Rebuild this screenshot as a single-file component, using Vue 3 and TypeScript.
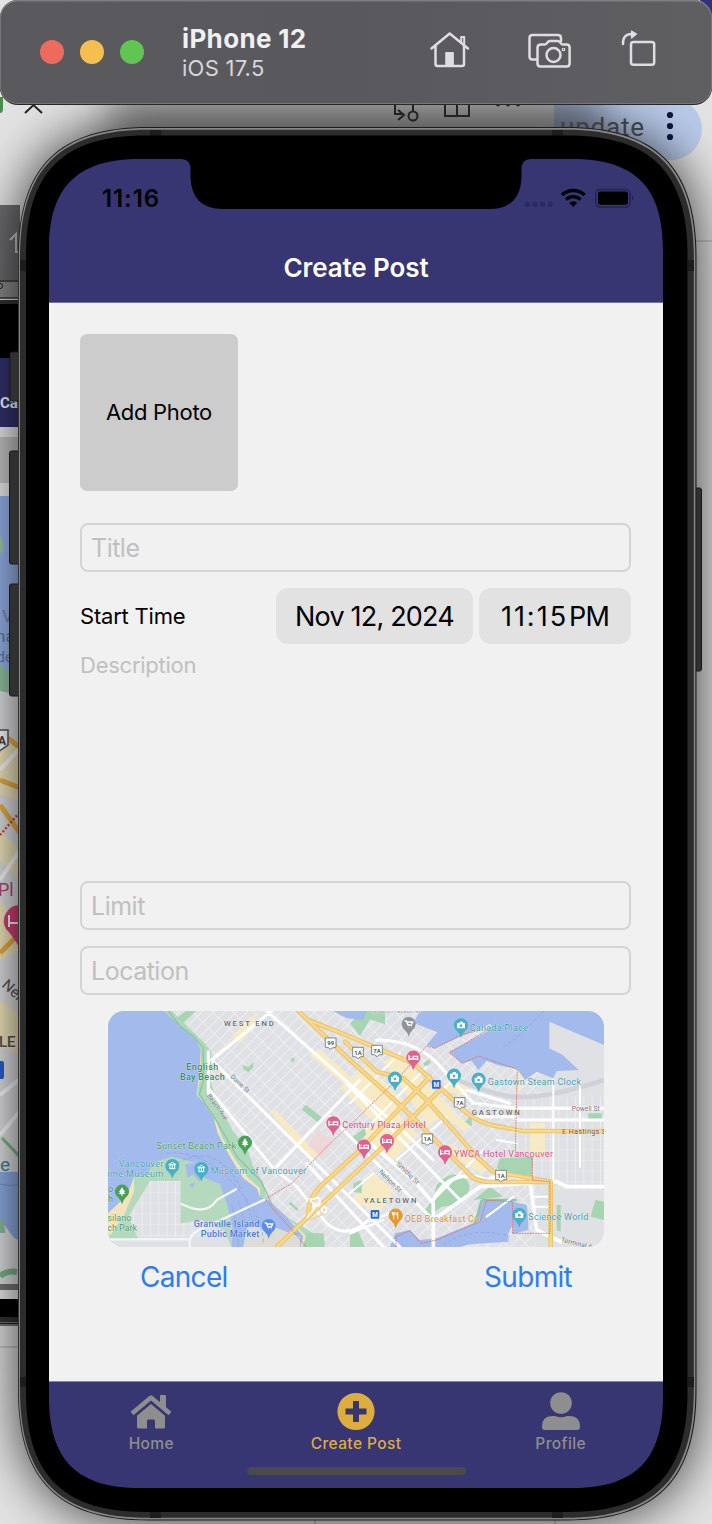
<script setup lang="ts">
interface Pin { x: number; y: number; color: string; kind: 'bed' | 'camera' | 'cart' | 'tree' | 'museum' | 'food' }
interface Label { x: number; y: number; text: string; color: string; size: number; width: number; rotate?: number; anchor?: string; weight?: number }
interface Shield { x: number; y: number; text: string }

function squircle(x: number, y: number, w: number, h: number, r: number): string {
  const e = r * 1.197
  const c = r * 0.368
  const X = x + w
  const Y = y + h
  return `M${x + e} ${y}H${X - e}C${X - c} ${y} ${X} ${y + c} ${X} ${y + e}V${Y - e}C${X} ${Y - c} ${X - c} ${Y} ${X - e} ${Y}H${x + e}C${x + c} ${Y} ${x} ${Y - c} ${x} ${Y - e}V${y + e}C${x} ${y + c} ${x + c} ${y} ${x + e} ${y}Z`
}

const frame = {
  edge: squircle(18, 127, 678.5, 1393.5, 109),
  shine: squircle(18.8, 128, 676.6, 1391.5, 108),
  band: squircle(20, 129.8, 673.8, 1388, 107),
  glass: squircle(26, 135.5, 661.5, 1376.5, 100),
}

const pink = '#e0608e'
const teal = '#48afc4'
const pins: Pin[] = [
  { x: 700, y: 370, color: pink, kind: 'bed' },
  { x: 792, y: 440, color: pink, kind: 'bed' },
  { x: 861, y: 423, color: pink, kind: 'bed' },
  { x: 940, y: 173, color: pink, kind: 'bed' },
  { x: 1035, y: 457, color: pink, kind: 'bed' },
  { x: 435, y: 428, color: '#48a357', kind: 'tree' },
  { x: 66, y: 575, color: '#48a357', kind: 'tree' },
  { x: 217, y: 498, color: teal, kind: 'museum' },
  { x: 304, y: 507, color: teal, kind: 'museum' },
  { x: 506, y: 678, color: '#5a8df0', kind: 'cart' },
  { x: 926, y: 72, color: '#8e949a', kind: 'cart' },
  { x: 1083, y: 76, color: teal, kind: 'camera' },
  { x: 885, y: 236, color: teal, kind: 'camera' },
  { x: 1062, y: 227, color: teal, kind: 'camera' },
  { x: 1136, y: 239, color: teal, kind: 'camera' },
  { x: 1258, y: 645, color: teal, kind: 'camera' },
  { x: 887, y: 647, color: '#e5982f', kind: 'food' },
]
const labels: Label[] = [
  { x: 372, y: 78, text: 'WEST END', color: '#66696e', size: 23, width: 149, weight: 500 },
  { x: 259, y: 210, text: 'English', color: '#388f5c', size: 27, width: 96, weight: 500 },
  { x: 240, y: 241, text: 'Bay Beach', color: '#388f5c', size: 27, width: 134, weight: 500 },
  { x: 169, y: 446, text: 'Sunset Beach Park', color: '#4c9a6a', size: 27, width: 239 },
  { x: 56, y: 500, text: 'Vancouver', color: '#459cac', size: 27, width: 134 },
  { x: 22, y: 530, text: 'ime Museum', color: '#459cac', size: 27, width: 168 },
  { x: 332, y: 523, text: 'Museum of Vancouver', color: '#459cac', size: 27, width: 286 },
  { x: 281, y: 681, text: 'Granville Island', color: '#4878dc', size: 27, width: 197, weight: 500 },
  { x: 302, y: 711, text: 'Public Market', color: '#4878dc', size: 27, width: 176, weight: 500 },
  { x: 24, y: 577, text: 'o', color: '#388f5c', size: 27, width: 15 },
  { x: 24, y: 607, text: 'h', color: '#388f5c', size: 27, width: 15 },
  { x: 22, y: 664, text: 'silano', color: '#4c9a6a', size: 27, width: 72 },
  { x: 22, y: 694, text: 'ch Park', color: '#4c9a6a', size: 27, width: 89 },
  { x: 727, y: 385, text: 'Century Plaza Hotel', color: '#d94f82', size: 27, width: 250 },
  { x: 1062, y: 471, text: 'YWCA Hotel Vancouver', color: '#d94f82', size: 27, width: 297 },
  { x: 1109, y: 92, text: 'Canada Place', color: '#459cac', size: 27, width: 175 },
  { x: 1163, y: 254, text: 'Gastown Steam Clock', color: '#459cac', size: 27, width: 280 },
  { x: 1285, y: 661, text: 'Science World', color: '#459cac', size: 27, width: 180 },
  { x: 914, y: 665, text: 'OEB Breakfast Co', color: '#dc9235', size: 27, width: 224 },
  { x: 1115, y: 346, text: 'GASTOWN', color: '#66696e', size: 23, width: 144, weight: 500 },
  { x: 791, y: 608, text: 'YALETOWN', color: '#66696e', size: 23, width: 158, weight: 500 },
  { x: 1415, y: 334, text: 'Powell St', color: '#70747a', size: 20, width: 84 },
  { x: 1386, y: 403, text: 'E Hastings S', color: '#705634', size: 22, width: 132 },
  { x: 1382, y: 725, text: 'Terminal A', color: '#70747a', size: 20, width: 96, rotate: 14 },
  { x: 390, y: 232, text: 'Davie St', color: '#70747a', size: 20, width: 70, rotate: 43 },
  { x: 320, y: 288, text: 'Beach Ave', color: '#70747a', size: 20, width: 92, rotate: 54 },
  { x: 888, y: 494, text: 'Smithe St', color: '#70747a', size: 20, width: 86, rotate: 45 },
  { x: 836, y: 517, text: 'Nelson St', color: '#70747a', size: 20, width: 86, rotate: 45 },
  { x: 816, y: 38, text: '(ydənɒʔ) əsədmən', color: '#9aa2ac', size: 18, width: 150 },
]
const shields: Shield[] = [
  { x: 692, y: 130, text: '99' },
  { x: 774, y: 158, text: '1A' },
  { x: 831, y: 152, text: '7A' },
  { x: 1079, y: 309, text: '7A' },
  { x: 982, y: 418, text: '1A' },
  { x: 1203, y: 527, text: '1A' },
]
</script>

<template>
  <main class="desktop">
    <svg class="layer" width="712" height="1524" viewBox="0 0 712 1524">
      <defs>
        <filter id="soft" x="-20%" y="-20%" width="140%" height="140%"><feGaussianBlur stdDeviation="26" /></filter>
        <filter id="near" x="-20%" y="-200%" width="140%" height="500%"><feGaussianBlur stdDeviation="18" /></filter>
        <clipPath id="strip"><rect x="0" y="205" width="20" height="1121" /></clipPath>
      </defs>
      <rect width="712" height="1524" fill="#e2e2e2" />
      <path d="M700 0h12v26z" fill="#33317c" />
      <path d="M554 98H671a31 31 0 0 1 0 62H554z" fill="#b9cbea" />
      <path d="M696 241h16M0 1347h20M315 1515v9M555 1515v9" stroke="#aaa" stroke-width="1.2" />

      <g clip-path="url(#strip)">
        <rect y="205" width="20" height="76" fill="#6d6c70" />
        <path d="M10 240l6-6v18h6" fill="none" stroke="#c8c8cc" stroke-width="2" />
        <rect y="280" width="20" height="18" fill="#8b8b8b" />
        <path d="M0 281h20M0 298h20" stroke="#333" stroke-width="1.5" />
        <circle cx="0" cy="286" r="2.6" fill="none" stroke="#222" />
        <rect y="300" width="20" height="4" fill="#333" />
        <rect y="304" width="20" height="54" fill="#000" />
        <rect y="358" width="20" height="69" fill="#34326f" />
        <rect y="427" width="20" height="10" fill="#eee" />
        <rect y="437" width="20" height="46" fill="#c8c8c8" />
        <rect y="483" width="20" height="13" fill="#eee" />
        <rect y="496" width="20" height="788" fill="#e2e3e5" />
        <rect y="496" width="20" height="190" fill="#98b5ee" />
        <path d="M0 536q6 10 0 18z" fill="#a9cc9c" />
        <path d="M0 665l10 8 10 22-20-4z" fill="#96c6a3" />
        <path d="M0 750l20-8v60l-20-8zM0 830l20 20v30l-20-20zM0 900l20 30v20l-20 10zM0 1000l20 15v40l-20-8z" fill="#f5eac0" />
        <path d="M8 738l12 10M0 780q10 4 20 8M0 805l20 28M0 953l20-20" fill="none" stroke="#eab344" stroke-width="5" />
        <path d="M0 770l20-22M0 880l20-30M0 1095l20-16M0 1135l20-24" stroke="#fff" stroke-width="4" />
        <path d="M0 835l20-23" stroke="#d4444c" stroke-width="2.5" stroke-dasharray="2 2" />
        <path d="M-4 730h12v15l-10 7z" fill="#fff" stroke="#555" stroke-width="1.5" />
        <path d="M0 1172h20v68q-6 0-12-10T0 1228z" fill="#92b0e9" />
        <path d="M0 1184q10 3 20 0" fill="none" stroke="#7897d4" stroke-width="1.200" />
        <path d="M0 1218q5 5 5 15H0z" fill="#8fc09c" />
        <path d="M2 1138l17 18" stroke="#82b78f" stroke-width="3" />
        <path d="M0 1276q8-6 17-4" fill="none" stroke="#82b78f" stroke-width="6" />
        <path d="M20 905a16 16 0 0 0-14 24q8 8 14 20z" fill="#d84279" />
        <path d="M9 915v12m0-4h10" stroke="#fff" stroke-width="2" />
        <rect x="-2" y="1061" width="6" height="18" rx="2" fill="#2a61d2" />
        <rect y="1284" width="20" height="6" fill="#777" />
        <rect y="1290" width="20" height="9" fill="#eee" />
        <rect y="1299" width="20" height="18" fill="#000" />
        <rect y="1317" width="20" height="5" fill="#333" />
        <rect y="1322" width="20" height="4" fill="#777" />
        <path d="M0 1323.500h20" stroke="#222" />
        <g class="strip-text">
          <text x="-2" y="745" font-size="12" font-weight="700" fill="#444">A</text>
          <text x="0" y="408" font-size="15" font-weight="700" fill="#fff">Ca</text>
          <text x="2" y="622" font-size="17" fill="#7187aa">V</text>
          <text x="-4" y="642" font-size="17" fill="#61779a">na</text>
          <text x="-3" y="662" font-size="14" fill="#61779a">de</text>
          <text x="-2" y="896" font-size="18" fill="#bf4676">Pl</text>
          <text x="1" y="986" font-size="15" fill="#555" transform="rotate(42 1 986)">Nel</text>
          <text x="-1" y="1047" font-size="15" font-weight="500" fill="#555">LE</text>
          <text x="0" y="1171" font-size="19" fill="#368b9c">e</text>
        </g>
      </g>
      <path class="phone-shadow" :d="frame.edge" filter="url(#soft)" />
      <rect class="near-shadow" x="110" y="92" width="490" height="50" filter="url(#near)" />

      <g fill="none" stroke="#222" stroke-width="2">
        <path d="M25 113l8.500-8 8.500 8" />
        <path d="M395 100v14h8m-5-4l6 5-6 5M413 100v11M445 98v18h24V98M457 98v18" />
        <circle cx="413" cy="116" r="4.500" />
      </g>
      <path d="M0 97h3v12q0 4-3 4" fill="#4c8c4a" />
      <g fill="#282828"><circle cx="498" cy="104.500" r="2" /><circle cx="508" cy="104.500" r="2" /><circle cx="518" cy="104.500" r="2" /></g>
      <g fill="#081637"><circle cx="670" cy="115" r="3.100" /><circle cx="670" cy="126" r="3.100" /><circle cx="670" cy="137" r="3.100" /></g>
      <text class="update" x="560" y="136" textLength="84">update</text>

      <g fill="#303030" stroke="#191919" stroke-width="1">
        <rect x="10" y="352" width="12" height="49" rx="2" />
        <rect x="9.500" y="451" width="12" height="113" rx="2" />
        <rect x="9.500" y="584" width="12" height="112" rx="2" />
        <rect x="692" y="488" width="9.500" height="183" rx="2" />
      </g>
      <path :d="frame.edge" fill="#1c1c1c" />
      <path :d="frame.shine" fill="#868686" />
      <path :d="frame.band" fill="#2c2c2c" />
      <g fill="#1c1c1c">
        <rect x="150" y="130" width="11" height="6" /><rect x="552" y="130" width="11" height="6" />
        <rect x="150" y="1512" width="11" height="6" /><rect x="552" y="1512" width="11" height="6" />
        <rect x="20" y="260" width="6" height="11" /><rect x="688" y="260" width="6" height="11" />
        <rect x="20" y="1377" width="6" height="10" /><rect x="688" y="1377" width="6" height="10" />
      </g>
      <path :d="frame.glass" fill="#000" />
    </svg>

    <header class="toolbar">
      <div class="lights"><i class="red"></i><i class="amber"></i><i class="green"></i></div>
      <div class="device"><strong>iPhone 12</strong><span>iOS 17.5</span></div>
      <svg class="tools" width="240" height="50" viewBox="425 25 240 50" fill="none" stroke="#dfdde3" stroke-width="2.500" stroke-linecap="round" stroke-linejoin="round">
        <path d="M431.500 48.500L449.700 33.500L468 48.500M435.500 46V64q0 2 2 2H462q2 0 2-2V46" />
        <path d="M461.200 42V37h3V44" stroke-width="2" />
        <path d="M445.200 66V53q0-.9.9-.9H453q.9 0 .9.900V66z" fill="#dfdde3" stroke="none" />
        <path d="M536 59.500h-3.500q-3 0-3-3V38q0-3 3-3H558q3 0 3 3V41" />
        <path d="M541 44.500h4q1.200 0 2-1.500l.8-1q.7-1 2-1h8q1.300 0 2 1l.8 1q.8 1.500 2 1.500h4q3 0 3 3V63.500q0 3-3 3H540.500q-3 0-3-3V47.500q0-3 3.500-3z" fill="#5c5b5f" />
        <circle cx="553.500" cy="55" r="7" /><circle cx="563.500" cy="49.500" r=".6" />
        <rect x="631" y="42" width="23.200" height="22.800" rx="2.500" />
        <path d="M623 44q-.2-10 8.500-10" /><path d="M631.500 31l5 3-5 4z" fill="#dfdde3" stroke-width="1.200" />
      </svg>
    </header>

    <section class="screen">
      <div class="nav">
        <div class="status">
          <span class="time">11:16</span>
          <svg width="112" height="24" viewBox="523 186 112 24">
            <g fill="#2b2960"><circle cx="527.500" cy="204.300" r="2.600" /><circle cx="535" cy="204.300" r="2.600" /><circle cx="542.700" cy="204.300" r="2.600" /><circle cx="550.300" cy="204.300" r="2.600" /></g>
            <g fill="none" stroke="#000" stroke-width="3.300"><path d="M562 195a16.300 16.300 0 0 1 22.500 0M566 199.600a10.300 10.300 0 0 1 14.500 0" /></g>
            <path d="M569.200 202.800q4-3.300 8 0l-4 4.100z" />
            <rect x="595.700" y="189.500" width="34.500" height="17.500" rx="4.500" fill="none" stroke="#25234f" stroke-width="1.400" />
            <rect x="598" y="191.500" width="30" height="13.300" rx="2.500" /><path d="M632 195q2.400 3 0 6z" fill="#25234f" />
          </svg>
        </div>
        <h1>Create Post</h1>
      </div>

      <form class="form" @submit.prevent>
        <div class="photo"><span>Add Photo</span></div>
        <div class="field title">Title</div>
        <div class="when">
          <span class="when-label">Start Time</span>
          <div class="chip date"><span>Nov 12, 2024</span></div>
          <div class="chip clock"><span class="digits">11:15</span><span class="pm">PM</span></div>
        </div>
        <div class="description"><span>Description</span></div>
        <div class="field limit">Limit</div>
        <div class="field location">Location</div>

        <svg class="map" width="496" height="236" viewBox="24 33 1488 708" preserveAspectRatio="none">
          <defs>
            <pattern id="blocks" width="24" height="43" patternUnits="userSpaceOnUse" patternTransform="rotate(45)">
              <path d="M0 0H24M0 0V43" stroke="#f2f3f5" stroke-width="4.500" fill="none" />
            </pattern>
            <pattern id="square" width="25" height="32" patternUnits="userSpaceOnUse">
              <path d="M0 0H25M0 0V32" stroke="#f1f2f4" stroke-width="3.500" fill="none" />
            </pattern>
          </defs>
          <rect x="24" y="33" width="1488" height="708" fill="#dfe1e5" />
          <rect x="24" y="33" width="1300" height="708" fill="url(#blocks)" />
          <path d="M1250 290H1512V741H1310V540H1250z" fill="#dfe1e5" />
          <path d="M1250 290H1512V570H1250z" fill="url(#square)" />

          <g fill="#f7ebc6">
            <path d="M395 110l60-62 25 12-60 68zM628 165l30-18 118 105-14 25zM510 335l18-4 125 132-20 18zM720 260l80-60 120 110-70 80-60-55zM850 185l45-25 160 165-70 55zM820 520l60 50-40 70-85-40zM780 400l90-85 85 90-80 80zM1000 290l110 85-15 22-115-90zM1050 430l110 70-15 20-120-70zM1252 210l16-8v60l-16 20zM1290 370h45v100h-45zM1040 230l60 30v30l-70-20zM830 40l20 5-20 10z" />
          </g>
          <path d="M655 388l45 40-35 45-42-38z" fill="#eed7d9" />

          <path d="M24 33H215L310 125 335 155 330 240 350 300 400 395 440 440 460 500 490 550 500 600 560 650 640 700V741H24z" fill="#aedabb" />
          <path d="M24 33H192L245 80 290 120 302 150V220L292 285 320 310 345 350 365 410 400 470 445 535 480 565 480 590 505 600 560 650 615 705 622 741H24z" fill="#f5e3bf" />
          <path d="M24 33H192L245 80 290 120 302 150 298 220 290 285 315 310 340 350 353 400 390 470 430 535 470 565 480 590 505 600 560 650 610 710 602 741H24z" fill="#a2bbec" />
          <path d="M24 690L85 595 102 530H130L170 484 215 470 285 488 315 535 360 552 383 620 398 680 395 741H24z" fill="#b4d9bd" />
          <path d="M24 640L82 585 102 530V575L70 650 24 715z" fill="#f4e2bd" />
          <path d="M255 493l35-5 24 25-16 32-18-22-17 10zM266 555l18-8-5 16z" fill="#a2bbec" />
          <path d="M150 543H242V670L305 660 370 690 395 741H24V718H115L85 650z" fill="#dfe1e5" />
          <path d="M150 543H242V670L300 660V711H115L85 650z" fill="url(#square)" />
          <path d="M440 680l80 0 80 30 0 31H430z" fill="#eee6cf" opacity=".8" />
          <path d="M200 460q110-10 200 90t90 180M230 490Q350 420 425 570" fill="none" stroke="#84a2df" stroke-width="2" stroke-dasharray="12 7" />
          <path d="M395 610l22 130M415 600l25 90M435 590l25 80" stroke="#8ca9df" stroke-width="2" />
          <path d="M205 33l35 45 40 30 30 35v100l-12 40 40 60 75 130 70 70 35 75" fill="none" stroke="#8dc49b" stroke-width="4" />

          <g fill="#a7d4b1">
            <path d="M427 195l18 6 15-16v16l-14 16-15-8zM617 314l54 42-15 13-50-40zM571 178l10-6 4 11-10 4zM570 604l26 24-4 5-25-21zM780 405v30l-20-12zM230 55l28-22h30l-38 35z" />
            <path d="M1010 555q45-55 90-15 25 30-20 60-20 20-55 20l-20 15-10-20zM995 600v65l-22-30zM760 550l25-10v40l-25-5zM758 410l35-25 6 18-25 25zM1200 475l100-5-5 70-65-15-40-20zM1095 365l20-20v35zM1370 615l12 0v80l-12-5zM1486 600l26 5v55l-40-10zM625 700h45l5 41h-70zM750 705l25-10 20 46h-45zM1465 340h40v20h-40zM750 70l40-37h65v40l-45-15-30 50zM1120 600l50-40 40 30zM970 190l18-12 3 10-15 15z" />
          </g>

          <path d="M990 33H1512V135L1348 65V145L1388 165 1436 210 1370 213 1360 235 1310 215 1275 240 1250 206 1195 196 1160 182 1135 210 1115 182 1085 190 1048 156 1180 85 1170 72 1080 110 1005 145 980 135 1012 97 940 68 960 33z" fill="#a2bbec" />
          <path d="M698 33H800L790 60 740 55z" fill="#a2bbec" />
          <path d="M1150 600L1245 605 1238 675 1225 700 1225 725 1110 733 1080 741H870L885 700 930 690 960 720 1010 715 1120 670z" fill="#a2bbec" />
          <path d="M1236 605l45 10 5 75-48 12z" fill="#a2bbec" />
          <path d="M1145 600h105M1125 670l20-70" stroke="#8fc6a0" stroke-width="7" />
          <path d="M1210 140q50-30 122-107M1030 735q90-60 200-25" fill="none" stroke="#83a1df" stroke-width="2" stroke-dasharray="10 7" />
          <path d="M1040 225q110 50 190 65 100 10 282-50" fill="none" stroke="#cfd2d7" stroke-width="14" />

          <g fill="none" stroke="#fff" stroke-linecap="round" stroke-linejoin="round">
            <path d="M335 180L515 33M335 180L900 741M325 280V155M325 265L520 505 590 560 680 670Q740 720 800 665L870 640M530 500L780 240M500 33L900 385 1000 480M690 350L1000 660M620 490L850 741M740 250L1080 600" stroke-width="9" />
            <path d="M270 741Q260 700 320 680L495 598M24 718H270M245 612Q320 650 350 600L408 568" stroke-width="7" stroke="#f4f5f7" />
            <path d="M830 120Q960 120 1030 210L1120 310 1250 325H1512M1100 270L1230 310M1120 350H1250M1250 360H1512" stroke-width="9" />
            <path d="M1000 741V610L940 540 810 430M1000 600Q1050 500 1160 540L1220 520 1290 545 1310 690 1382 725M1290 545H1370L1400 560H1512M1000 660L1140 560 1300 548" stroke-width="11" />
            <path d="M750 700L850 660M750 310L900 160M800 385L980 200M850 430L1060 240M890 480L1040 350M1360 240V540M1440 250V500M1000 600L1150 450M1190 420L1250 430M750 580L820 520M1160 650L1240 590M1300 590H1350M1300 620H1350M1300 650H1350" stroke-width="6" />
          </g>
          <g fill="none" stroke-linecap="round" stroke-linejoin="round">
            <path d="M610 660Q690 655 678 595M620 655Q615 600 660 575" stroke="#f0d9a0" stroke-width="6" />
            <path d="M595 33L750 180 900 315 1010 425 1100 515Q1120 545 1170 546H1352V741M625 60L750 110 940 190 1060 300Q1120 370 1200 380L1270 393H1512M735 125L830 215 910 235 970 290 1060 390 1130 470 1180 515 1350 545M530 741L620 655 860 430 1020 270M625 645Q625 595 660 560L780 450 990 230" stroke="#edc46d" stroke-width="14" />
            <path d="M595 33L750 180 900 315 1010 425 1100 515Q1120 545 1170 546H1352V741M625 60L750 110 940 190 1060 300Q1120 370 1200 380L1270 393H1512M735 125L830 215 910 235 970 290 1060 390 1130 470 1180 515 1350 545M530 741L620 655 860 430 1020 270M625 645Q625 595 660 560L780 450 990 230" stroke="#f9d98b" stroke-width="7" />
            <path d="M622 652L655 610M640 598q20-14 20 8t-20 4 0-12M665 625q14-12 14 4t-14 2z" stroke="#fff" stroke-width="5" />
          </g>
          <path d="M888 741V710L930 692 962 730 1010 720 1140 665 1160 601 1238 605 1238 700H1350V545L1297 540V475L1246 455 1252 208 1135 168 1087 190 1048 158 1180 80 1083 105 1005 145 980 138 890 240 750 375 680 440 575 550 495 598 620 741" fill="none" stroke="#df746f" stroke-width="3" stroke-dasharray="5 3" />

          <g v-for="s in shields" :key="s.x" class="shield" :transform="`translate(${s.x} ${s.y})`">
            <path d="M-16-16H16V12L8 12 0 18-8 12H-16z" fill="#fff" stroke="#6d7176" stroke-width="2.500" stroke-linejoin="round" />
            <text y="6" text-anchor="middle" font-size="18" font-weight="600" fill="#44474b">{{ s.text }}</text>
          </g>
          <g v-for="m in [[1009, 253], [825, 643]]" :key="m[0]" :transform="`translate(${m[0]} ${m[1]})`">
            <rect x="-13" y="-13" width="26" height="26" rx="3" fill="#2d67d8" />
            <text y="7" text-anchor="middle" font-size="19" font-weight="700" fill="#fff">M</text>
          </g>
          <g v-for="(p, i) in pins" :key="i" :transform="`translate(${p.x} ${p.y})`">
            <path d="M0 38Q-3 25-12 17A21 21 0 1 1 12 17Q3 25 0 38z" :fill="p.color" />
            <path v-if="p.kind === 'bed'" d="M-13-8V8m0-4H13V-4H0V4m13 0v4M-8-3h2" fill="none" stroke="#fff" stroke-width="4" />
            <g v-else-if="p.kind === 'camera'"><path d="M-12-6h6l3-5H5l3 5h4V9H-12z" fill="#fff" /><circle cy="1" r="4" :fill="p.color" /></g>
            <path v-else-if="p.kind === 'cart'" d="M-12-9h5l5 12H8l4-9H-5M-1 9h1M7 9h1" fill="none" stroke="#fff" stroke-width="4" />
            <path v-else-if="p.kind === 'tree'" d="M0-13L9 1H5L10 7H2V12H-2V7H-10L-5 1H-9z" fill="#fff" />
            <path v-else-if="p.kind === 'museum'" d="M-11-4L0-11 11-4zM-9 8H9M-7-3V7M0-3V7M7-3V7" fill="none" stroke="#fff" stroke-width="3" />
            <path v-else d="M-6-11V11M-10-11v8h8v-8M6 11V-11q-6 6 0 13" fill="none" stroke="#fff" stroke-width="3" />
          </g>
          <text v-for="l in labels" :key="l.text" :x="l.x" :y="l.y" :font-size="l.size" :font-weight="l.weight ?? 400" :fill="l.color" :textLength="l.width" :transform="l.rotate ? `rotate(${l.rotate} ${l.x} ${l.y})` : undefined" class="place">{{ l.text }}</text>
        </svg>

        <div class="actions"><button type="button" class="cancel">Cancel</button><button type="button" class="submit">Submit</button></div>
      </form>

      <nav class="tabs">
        <div class="tab">
          <svg width="44" height="40" viewBox="0 0 44 40" fill="#8e8e8e">
            <path d="M22 13L8 24.700V36q0 1.500 1.500 1.500H18V30q0-1.500 1.500-1.500h5q1.500 0 1.500 1.500v7.500h8.500q1.500 0 1.500-1.500V24.700z" />
            <path d="M3 22.500L22 6.500 41 22.500" fill="none" stroke="#8e8e8e" stroke-width="4.400" stroke-linejoin="round" /><path d="M31 5q0-1 1-1h4q1 0 1 1V19l-6-5z" />
          </svg>
          <span>Home</span>
        </div>
        <div class="tab active">
          <svg width="44" height="40" viewBox="0 0 44 40"><circle cx="22" cy="20.500" r="18.600" fill="#ddae3e" /><path d="M22 10v21M11.500 20.500h21" stroke="#383573" stroke-width="6" stroke-linecap="butt" /></svg>
          <span>Create Post</span>
        </div>
        <div class="tab">
          <svg width="44" height="40" viewBox="0 0 44 40" fill="#8e8e8e"><circle cx="22" cy="12" r="10.800" /><path d="M3 35.500Q3 25 13 25H16q6 2.500 12 0H31Q41 25 41 35.500 41 39 38 39H6Q3 39 3 35.500z" /></svg>
          <span>Profile</span>
        </div>
      </nav>
      <div class="home-bar"></div>
    </section>
  </main>
</template>

<style>
html, body { margin: 0; }
</style>

<style scoped>
.desktop { position: relative; width: 712px; height: 1524px; overflow: hidden; font-family: Inter, "Liberation Sans", sans-serif; }
.layer { position: absolute; left: 0; top: 0; display: block; }
.phone-shadow { fill: #000; opacity: .76; }
.near-shadow { fill: #000; opacity: .34; }
.update { font-family: Roboto, sans-serif; font-size: 26px; fill: #3b3e46; }
.strip-text { font-family: Roboto, sans-serif; }
.toolbar { position: relative; box-sizing: border-box; height: 105px; display: flex; align-items: flex-start; padding: 0 47px 0 40px; border-radius: 18px; border: solid #27272a; border-width: 0 0 1px; box-shadow: inset 0 1.5px 0 #7e7d80, inset 0 0 0 1px #77767a; background: linear-gradient(90deg, #5a595d, #59585c 50%, #5f5f62); }
.lights { display: flex; gap: 16px; margin-top: 40px; }
.lights i { width: 24px; height: 24px; border-radius: 50%; }
.red { background: #ed6a5e; } .amber { background: #f5bf4f; } .green { background: #61c554; }
.device { display: flex; flex-direction: column; width: 205px; margin-left: 38px; padding-top: 23px; }
.device strong { font-size: 26px; line-height: 32px; font-weight: 700; color: #f0eff1; letter-spacing: .35px; }
.device span { font-size: 22px; line-height: 27px; color: #d7d6db; letter-spacing: .25px; }
.tools { margin: 25px 0 0 38px; flex: none; }
.screen { position: relative; display: flex; flex-direction: column; margin: 54px 0 0 49px; width: 614px; height: 1329px; clip-path: path("M0 91C0 28 28 0 91 0H132Q141.500 0 141.500 10V17Q142 50 174 50H440Q472 50 472.500 17V10Q472.500 0 482 0H523C586 0 614 28 614 91V1238C614 1301 586 1329 523 1329H91C28 1329 0 1301 0 1238Z"); }
.nav { height: 143px; background: #383573; border-bottom: 1px solid #77749e; }
.status { height: 78px; display: flex; align-items: center; justify-content: space-between; padding: 0 28px 0 53px; }
.time { font-size: 24px; font-weight: 600; letter-spacing: .9px; }
.nav h1 { margin: 0; text-align: center; font-size: 26px; line-height: 62px; font-weight: 600; color: #fff; letter-spacing: -.1px; }
.form { display: flex; flex-direction: column; padding: 31px 32px 0 31px; height: 1078px; box-sizing: border-box; background: #f1f1f1; }
.photo { width: 158px; height: 157px; border-radius: 7px; background: #ccc; display: grid; place-items: center; font-size: 22px; letter-spacing: -.3px; }
.photo span { margin-top: -2px; }
.field { box-sizing: border-box; height: 49px; flex: none; border: 2px solid #d4d4d4; border-radius: 8px; padding-left: 9px; line-height: 46px; font-size: 25px; color: #c0c0c0; letter-spacing: -.5px; }
.title { margin-top: 32px; }
.when { display: flex; align-items: center; margin-top: 16px; height: 56px; }
.when-label { width: 196px; font-size: 22px; letter-spacing: -.2px; }
.chip { height: 56px; border-radius: 12px; background: #e2e2e2; display: flex; align-items: center; justify-content: center; font-size: 27px; white-space: nowrap; }
.date { width: 197px; letter-spacing: -.8px; padding-top: 1px; box-sizing: border-box; }
.clock { width: 152px; margin-left: 6px; gap: 1px; padding-top: 1px; box-sizing: border-box; }
.digits { letter-spacing: 2px; }
.pm { letter-spacing: -.8px; }
.description { height: 237px; padding-top: 7px; box-sizing: border-box; font-size: 22px; line-height: 28px; color: #c0c0c0; letter-spacing: -.25px; }
.location { margin-top: 16px; }
.map { display: block; flex: none; margin: 16px 0 0 28px; border-radius: 16px; font-family: Roboto, sans-serif; }
.place { paint-order: stroke; stroke: #ffffffa0; stroke-width: 2px; }
.actions { display: flex; justify-content: space-between; padding: 10px 59px 0 60px; }
.actions button { border: 0; padding: 0; background: none; font-family: inherit; font-size: 28px; line-height: 40px; color: #2f7cf0; letter-spacing: -.7px; }
.tabs { flex: 1; display: flex; background: #383573; border-top: 1px solid #8885a8; padding-top: 9px; }
.tab { flex: 1; display: flex; flex-direction: column; align-items: center; color: #8e8e8e; font-size: 15.500px; line-height: 22px; font-weight: 500; letter-spacing: .4px; }
.tab svg { margin-bottom: 2px; }
.active { color: #ddae3e; }
.home-bar { position: absolute; left: 198px; top: 1308px; width: 219px; height: 8px; border-radius: 4px; background: #4a494b; }
</style>
